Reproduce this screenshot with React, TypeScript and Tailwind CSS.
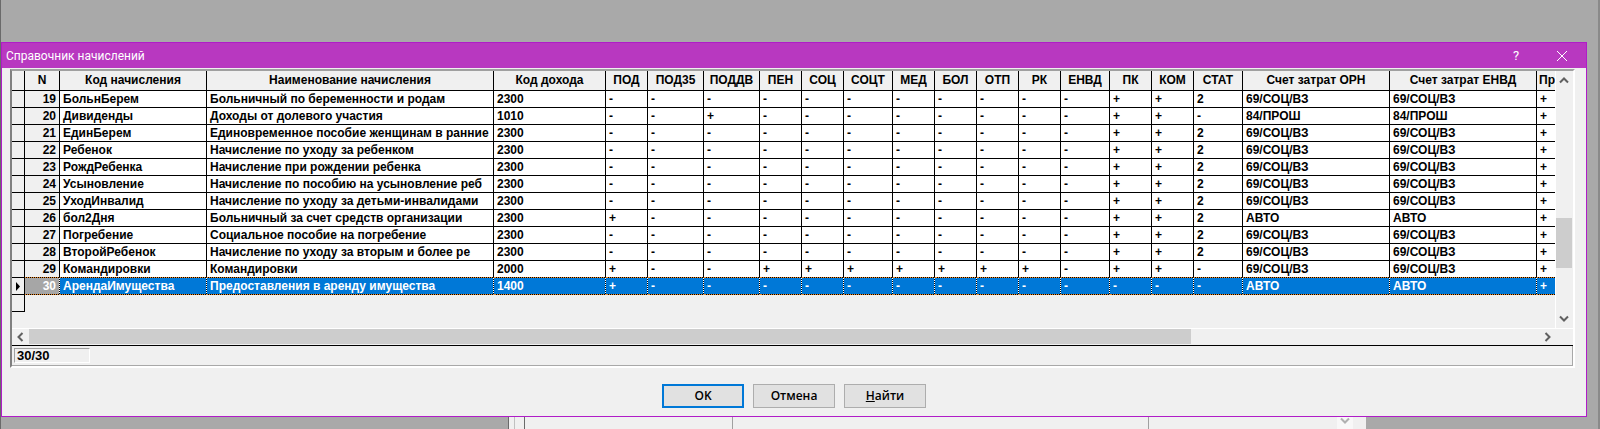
const cols = [
  { t: "N", w: "w-[35px]" },
  { t: "Код начисления", w: "w-[147px]" },
  { t: "Наименование начисления", w: "w-[287px]" },
  { t: "Код дохода", w: "w-[112px]" },
  { t: "ПОД", w: "w-[42px]" },
  { t: "ПОД35", w: "w-[56px]" },
  { t: "ПОДДВ", w: "w-[56px]" },
  { t: "ПЕН", w: "w-[42px]" },
  { t: "СОЦ", w: "w-[42px]" },
  { t: "СОЦТ", w: "w-[49px]" },
  { t: "МЕД", w: "w-[42px]" },
  { t: "БОЛ", w: "w-[42px]" },
  { t: "ОТП", w: "w-[42px]" },
  { t: "РК", w: "w-[42px]" },
  { t: "ЕНВД", w: "w-[49px]" },
  { t: "ПК", w: "w-[42px]" },
  { t: "КОМ", w: "w-[42px]" },
  { t: "СТАТ", w: "w-[49px]" },
  { t: "Счет затрат ОРН", w: "w-[147px]" },
  { t: "Счет затрат ЕНВД", w: "w-[147px]" },
  { t: "Про", w: "w-[35px]" },
];

const f = (s: string) => s.split("");
const rows: string[][] = [
  ["19", "БольнБерем", "Больничный по беременности и родам", "2300", ...f("-----------"), "+", "+", "2", "69/СОЦ/ВЗ", "69/СОЦ/ВЗ", "+"],
  ["20", "Дивиденды", "Доходы от долевого участия", "1010", ...f("--+--------"), "+", "+", "-", "84/ПРОШ", "84/ПРОШ", "+"],
  ["21", "ЕдинБерем", "Единовременное пособие женщинам в ранние", "2300", ...f("-----------"), "+", "+", "2", "69/СОЦ/ВЗ", "69/СОЦ/ВЗ", "+"],
  ["22", "Ребенок", "Начисление по уходу за ребенком", "2300", ...f("-----------"), "+", "+", "2", "69/СОЦ/ВЗ", "69/СОЦ/ВЗ", "+"],
  ["23", "РождРебенка", "Начисление при рождении ребенка", "2300", ...f("-----------"), "+", "+", "2", "69/СОЦ/ВЗ", "69/СОЦ/ВЗ", "+"],
  ["24", "Усыновление", "Начисление по пособию на усыновление реб", "2300", ...f("-----------"), "+", "+", "2", "69/СОЦ/ВЗ", "69/СОЦ/ВЗ", "+"],
  ["25", "УходИнвалид", "Начисление по уходу за детьми-инвалидами", "2300", ...f("-----------"), "+", "+", "2", "69/СОЦ/ВЗ", "69/СОЦ/ВЗ", "+"],
  ["26", "бол2Дня", "Больничный за счет средств организации", "2300", ...f("+----------"), "+", "+", "2", "АВТО", "АВТО", "+"],
  ["27", "Погребение", "Социальное пособие на погребение", "2300", ...f("-----------"), "+", "+", "2", "69/СОЦ/ВЗ", "69/СОЦ/ВЗ", "+"],
  ["28", "ВторойРебенок", "Начисление по уходу за вторым и более ре", "2300", ...f("-----------"), "+", "+", "2", "69/СОЦ/ВЗ", "69/СОЦ/ВЗ", "+"],
  ["29", "Командировки", "Командировки", "2000", ...f("+--+++++++-"), "+", "+", "-", "69/СОЦ/ВЗ", "69/СОЦ/ВЗ", "+"],
  ["30", "АрендаИмущества", "Предоставления в аренду имущества", "1400", ...f("+----------"), "-", "-", "-", "АВТО", "АВТО", "+"],
];

function Row({ r }: { r: string[] }) {
  const sel = r[0] === "30";
  const prev = r[0] === "29";
  return (
    <div className="flex h-[17px] w-max bg-black">
      <div className="w-[13px] shrink-0 border-r border-b border-black bg-[#f0f0f0] flex items-center justify-center">
        {sel && (
          <svg width="6" height="9" viewBox="0 0 6 9">
            <path d="M1 0 L5 4.5 L1 9 Z" fill="#000" />
          </svg>
        )}
      </div>
      {r.map((c, i) => (
        <div
          key={i}
          className={`${cols[i].w} shrink-0 h-[17px] whitespace-nowrap overflow-hidden leading-[17px] bg-clip-padding border-r ${
            i === 0 ? "text-right pr-[3px]" : "pl-[3px]"
          } ${
            sel
              ? `border-b border-b-[#f08a24] border-dotted border-r-solid border-r-white text-white ${i === 0 ? "bg-[#a6a6a6]" : "bg-[#0078d7]"}`
              : `${prev ? "border-b border-b-[#f08a24] border-dotted" : "border-b border-b-black"} border-r-black border-r-solid text-black ${i === 0 ? "bg-[#f0f0f0]" : "bg-white"}`
          }`}
        >
          {c}
        </div>
      ))}
    </div>
  );
}

export default function App() {
  return (
    <div className="w-[1600px] h-[429px] overflow-hidden flex flex-col bg-[#a9a9a9] border-l border-l-[#6a6a6a] border-r-2 border-r-[#8a8a8a] font-['Liberation_Sans',sans-serif]">
      <div className="h-[42px] shrink-0" />
      <div className="w-[1586px] h-[375px] shrink-0 border border-[#b01cc8] bg-[#f0f0f0] flex flex-col">
        <div className="h-[25px] shrink-0 bg-[#b838c0] flex items-center pl-[4px] text-white text-[12px] font-['Roboto',sans-serif]">
          <span className="flex-1">Справочник начислений</span>
          <span className="w-[14px] text-center text-[13px] mr-[33px]">?</span>
          <svg width="12" height="12" viewBox="0 0 12 12" className="mr-[18px]">
            <path d="M1 1 L11 11 M11 1 L1 11" stroke="#fff" strokeWidth="1" />
          </svg>
        </div>
        <div className="ml-[8px] mt-[1px] w-[1565px] h-[299px] shrink-0 border-t-2 border-l-2 border-r-2 border-b-2 border-t-[#a0a0a0] border-l-[#808080] border-r-white border-b-white flex flex-col text-[12px] font-bold leading-none">
          <div className="flex h-[258px] shrink-0 border-b border-b-white">
            <div className="w-[1544px] shrink-0 overflow-hidden border-r border-r-white">
              <div className="flex h-[20px] w-max border-b border-b-black">
                <div className="w-[13px] shrink-0 border-r border-r-black bg-[#f0f0f0]" />
                {cols.map((c, i) => (
                  <div
                    key={i}
                    className={`${c.w} shrink-0 border-r border-r-black text-center leading-[18px] whitespace-nowrap overflow-hidden ${i === 20 ? "text-left pl-[2px]" : ""}`}
                  >
                    {c.t}
                  </div>
                ))}
              </div>
              {rows.map((r) => (
                <Row key={r[0]} r={r} />
              ))}
              <div className="w-[13px] h-[17px] border-r border-b border-black" />
            </div>
            <div className="w-[16px] shrink-0 flex flex-col items-center">
              <svg width="10" height="7" viewBox="0 0 10 7" className="mt-[6px]">
                <path d="M1 5.5 L5 1.5 L9 5.5" fill="none" stroke="#606060" strokeWidth="2" />
              </svg>
              <div className="w-[16px] h-[50px] mt-[134px] bg-[#cdcdcd]" />
              <svg width="10" height="7" viewBox="0 0 10 7" className="mt-[47px]">
                <path d="M1 1.5 L5 5.5 L9 1.5" fill="none" stroke="#606060" strokeWidth="2" />
              </svg>
            </div>
          </div>
          <div className="flex h-[17px] shrink-0 items-start border-b border-b-black">
            <div className="w-[17px] h-[15px] shrink-0 flex justify-center items-center">
              <svg width="7" height="10" viewBox="0 0 7 10">
                <path d="M5.5 1 L1.5 5 L5.5 9" fill="none" stroke="#606060" strokeWidth="2" />
              </svg>
            </div>
            <div className="w-[1162px] h-[15px] shrink-0 bg-[#cdcdcd]" />
            <div className="w-[353px] shrink-0" />
            <div className="h-[15px] flex items-center">
              <svg width="7" height="10" viewBox="0 0 7 10">
                <path d="M1.5 1 L5.5 5 L1.5 9" fill="none" stroke="#606060" strokeWidth="2" />
              </svg>
            </div>
          </div>
          <div className="flex-1 border-r border-b border-r-[#a8a8a8] border-b-[#a8a8a8] pl-[2px] pt-[2px]">
            <div className="w-[76px] h-[15px] border-t border-l border-r border-b border-t-[#a0a0a0] border-l-[#a0a0a0] border-r-white border-b-white pl-[2px] text-[13px] leading-[14px] text-black">
              30/30
            </div>
          </div>
        </div>
        <div className="flex justify-center gap-[9px] mt-[16px] text-[12px] text-black font-['Open_Sans',sans-serif] font-semibold">
          <button className="w-[82px] h-[24px] bg-[#e1e1e1] border-2 border-[#0078d7]">OK</button>
          <button className="w-[82px] h-[24px] bg-[#e1e1e1] border border-[#adadad]">Отмена</button>
          <button className="w-[82px] h-[24px] bg-[#e1e1e1] border border-[#adadad]">
            <span className="underline">Н</span>айти
          </button>
        </div>
      </div>
      <div className="flex h-[12px] shrink-0">
        <div className="w-[508px] shrink-0 border-r border-r-[#6a6a6a]" />
        <div className="w-[6px] shrink-0 bg-[#f0f0f0] border-r border-r-[#c0c0c0]" />
        <div className="w-[10px] shrink-0 bg-[#f0f0f0] border-r border-r-[#6a6a6a]" />
        <div className="w-[208px] shrink-0 bg-[#f0f0f0] border-r border-r-[#a0a0a0]" />
        <div className="w-[416px] shrink-0 bg-[#f0f0f0] border-r border-r-[#a0a0a0]" />
        <div className="w-[188px] shrink-0 bg-[#f0f0f0]" />
        <div className="w-[16px] shrink-0 bg-[#f8f8f8] flex justify-center">
          <svg width="10" height="7" viewBox="0 0 10 7">
            <path d="M1 1.5 L5 5.5 L9 1.5" fill="none" stroke="#b0b0b0" strokeWidth="2" />
          </svg>
        </div>
        <div className="w-[13px] shrink-0 bg-[#f0f0f0]" />
      </div>
    </div>
  );
}
